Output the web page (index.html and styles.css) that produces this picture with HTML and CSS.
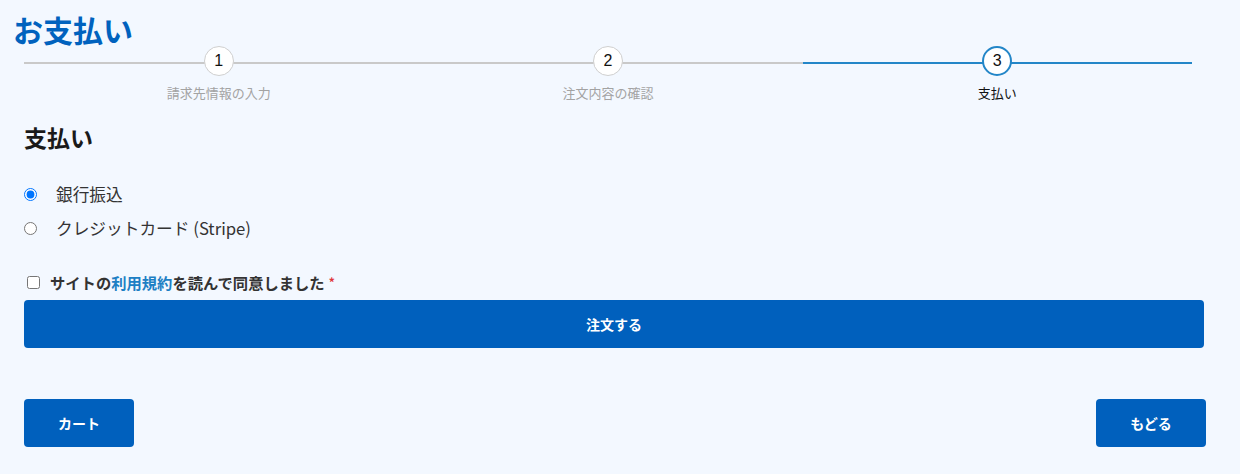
FILE: index.html
```html
<!DOCTYPE html>
<html lang="ja">
<head>
  <meta charset="UTF-8">
  <title>お支払い</title>
  <link rel="stylesheet" href="styles.css">
</head>
<body>

  <h1 class="page-title">お支払い</h1>

  <div class="content">
    <ol class="steps">
      <li class="step done">
        <span class="step-num">1</span>
        <span class="step-label">請求先情報の入力</span>
      </li>
      <li class="step done">
        <span class="step-num">2</span>
        <span class="step-label">注文内容の確認</span>
      </li>
      <li class="step active">
        <span class="step-num">3</span>
        <span class="step-label">支払い</span>
      </li>
    </ol>

    <h2 class="section-title">支払い</h2>

    <div class="methods">
      <label class="method">
        <input type="radio" name="method" value="bank" checked>
        <span>銀行振込</span>
      </label>
      <label class="method">
        <input type="radio" name="method" value="stripe">
        <span>クレジットカード (Stripe)</span>
      </label>
    </div>

    <label class="agree">
      <input type="checkbox" id="agree">
      <span>サイトの<a href="#">利用規約</a>を読んで同意しました</span>
      <span class="required">*</span>
    </label>

    <button class="btn btn-block">注文する</button>

    <div class="nav">
      <button class="btn btn-small">カート</button>
      <button class="btn btn-small btn-back">もどる</button>
    </div>
  </div>

</body>
</html>
```

FILE: styles.css
```css
body {
  margin: 0;
  padding: 12px 0 0 0;
  background: #f3f8ff;
  color: #333;
  font-family: 'Noto Sans CJK JP', 'Noto Sans', sans-serif;
  height: 474px;
  box-sizing: border-box;
  overflow: hidden;
}

.page-title {
  margin: 0 0 0 13px;
  font-size: 30px;
  line-height: 34px;
  font-weight: bold;
  color: #0062be;
}

.content {
  width: 1180px;
  margin-left: 24px;
}

/* progress steps */
.steps {
  list-style: none;
  margin: 0;
  padding: 0;
  width: 1168px;
  display: flex;
}

.step {
  flex: 1;
  position: relative;
  display: flex;
  flex-direction: column;
  align-items: center;
}

.step::before {
  content: '';
  position: absolute;
  left: 0;
  right: 0;
  top: 16px;
  height: 2px;
  background: #c9c9c9;
}

.step.active::before {
  background: #2386c8;
}

.step-num {
  position: relative;
  width: 28px;
  height: 28px;
  border: 1px solid #cfcfcf;
  border-radius: 50%;
  background: #fff;
  color: #111;
  font-family: 'Liberation Sans', sans-serif;
  font-size: 16px;
  line-height: 28px;
  text-align: center;
}

.step.active .step-num {
  border: 2px solid #2386c8;
  width: 26px;
  height: 26px;
  line-height: 26px;
}

.step-label {
  margin-top: 8px;
  font-size: 13px;
  line-height: 18px;
  color: #a3a3a3;
}

.step.active .step-label {
  color: #111;
}

.section-title {
  margin: 20px 0 0;
  font-size: 23px;
  line-height: 30px;
  font-weight: bold;
  color: #1a1a1a;
}

/* payment methods */
.methods {
  margin-top: 31px;
  display: flex;
  flex-direction: column;
  gap: 11px;
}

.method {
  display: flex;
  align-items: center;
  gap: 19px;
  font-size: 16.7px;
  line-height: 23px;
  color: #333;
}

.method input {
  margin: 0;
  width: 13px;
  height: 13px;
}

.agree {
  margin-top: 32px;
  display: flex;
  align-items: center;
  font-size: 15.3px;
  line-height: 20px;
  font-weight: bold;
  color: #333;
}

.agree input {
  margin: 0 10px 0 3px;
  width: 13px;
  height: 13px;
}

.agree a {
  color: #1d7fc4;
  text-decoration: none;
}

.required {
  margin-left: 4px;
  color: #e0363c;
  font-size: 12px;
  align-self: flex-start;
}

/* buttons */
.btn {
  border: none;
  border-radius: 4px;
  background: #0060bd;
  color: #fff;
  font-family: 'Noto Sans CJK JP', 'Noto Sans', sans-serif;
  font-size: 14px;
  font-weight: bold;
  height: 48px;
  cursor: pointer;
}

.btn-block {
  display: block;
  width: 100%;
  margin-top: 8px;
}

.nav {
  margin-top: 51px;
  display: flex;
  justify-content: space-between;
  width: 1182px;
}

.btn-small {
  width: 110px;
}
```
